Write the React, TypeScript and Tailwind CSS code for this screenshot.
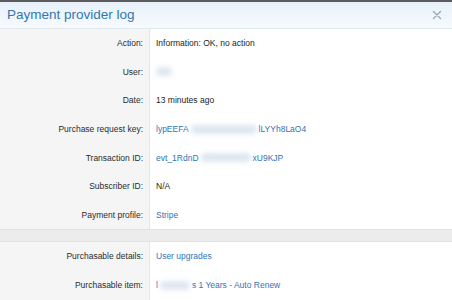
import React from "react";

const Blur = ({ w, className = "" }: { w: number; className?: string }) => (
  <span
    className={`inline-block h-[9px] rounded-full bg-[#dfe6f1] blur-[2.5px] align-middle ${className}`}
    style={{ width: w }}
  />
);

type Row = { label: string; value: React.ReactNode };

const rows1: Row[] = [
  { label: "Action:", value: <span className="text-[#1d1d1d]">Information: OK, no action</span> },
  { label: "User:", value: <Blur w={16} /> },
  { label: "Date:", value: <span className="text-[#1d1d1d]">13 minutes ago</span> },
  {
    label: "Purchase request key:",
    value: (
      <span className="flex items-center text-[#2f74b5]">
        <span>lypEEFA</span>
        <Blur w={66} className="mx-[2px]" />
        <span>lLYYh8LaO4</span>
      </span>
    ),
  },
  {
    label: "Transaction ID:",
    value: (
      <span className="flex items-center text-[#2f74b5]">
        <span>evt_1RdnD</span>
        <Blur w={50} className="mx-[2px]" />
        <span>xU9KJP</span>
      </span>
    ),
  },
  { label: "Subscriber ID:", value: <span className="text-[#1d1d1d]">N/A</span> },
  { label: "Payment profile:", value: <span className="text-[#2f74b5]">Stripe</span> },
];

const rows2: Row[] = [
  { label: "Purchasable details:", value: <span className="text-[#2f74b5]">User upgrades</span> },
  {
    label: "Purchasable item:",
    value: (
      <span className="flex items-center text-[#2f74b5]">
        <span>l</span>
        <Blur w={30} className="mx-[2px]" />
        <span>s 1 Years - Auto Renew</span>
      </span>
    ),
  },
];

const RowView = ({ r }: { r: Row }) => (
  <div className="flex h-[28.64px]">
    <div className="flex w-[150px] shrink-0 items-center justify-end border-r border-[#e6e6e6] bg-[#f5f5f5] pr-[6px] text-[#2b2b2b]">
      {r.label}
    </div>
    <div className="flex flex-1 items-center bg-white pl-[6px]">{r.value}</div>
  </div>
);

export default function App() {
  return (
    <div
      className="h-[300px] w-[452px] overflow-hidden bg-white text-[8.5px] leading-none"
      style={{ fontFamily: '"Liberation Sans", Arial, sans-serif' }}
    >
      <div className="h-[2px] bg-[#5c5c5c]" />
      <div className="flex h-[27px] items-center justify-between border-b border-[#dfe7ef] bg-gradient-to-b from-[#e8f1fa] to-[#f7fafd] pl-[7px] pr-[10px]">
        <span className="text-[13.5px] text-[#3276b1]">Payment provider log</span>
        <svg width="10" height="10" viewBox="0 0 10 10" className="mt-[-1px]">
          <path d="M1.5 1.5 L8.5 8.5 M8.5 1.5 L1.5 8.5" stroke="#93a9bf" strokeWidth="1.4" strokeLinecap="round" />
        </svg>
      </div>
      {rows1.map((r) => (
        <RowView key={r.label} r={r} />
      ))}
      <div className="h-[13px] border-y border-[#e2e2e2] bg-[#ececec]" />
      {rows2.map((r) => (
        <RowView key={r.label} r={r} />
      ))}
      <div className="h-px bg-[#e2e2e2]" />
    </div>
  );
}
